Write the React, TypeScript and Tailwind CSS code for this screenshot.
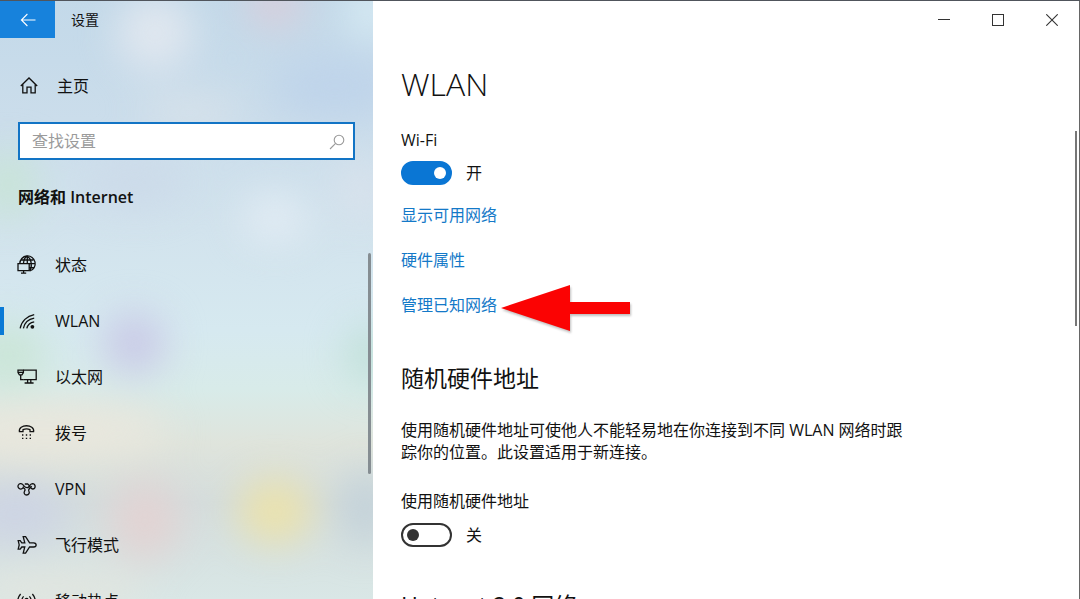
import type { ReactNode } from "react";

function Icon({ children }: { children: ReactNode }) {
  return (
    <svg
      viewBox="0 0 20 20"
      className="size-5 shrink-0"
      fill="none"
      stroke="currentColor"
      strokeWidth="1.3"
      aria-hidden="true"
    >
      {children}
    </svg>
  );
}

const HomeIcon = () => (
  <Icon>
    <path d="M1.8 10 L10 2 L18.2 10 M3.8 8.4 V16.8 H8 V11.2 H12 V16.8 H16.2 V8.4" />
  </Icon>
);

const StatusIcon = () => (
  <Icon>
    <path d="M2.8 8.6 A7.7 7.7 0 1 1 12.8 16 M4.4 5 H16.4 M12.2 12.6 H17.4 M12 8.6 H18" />
    <path d="M6.4 8.6 C6.8 4.6 8.4 1.8 10.3 1.4 C14.8 3.8 15.4 12.4 12.6 15.8 M10.3 1.4 V8.6" />
    <path d="M1 8.6 H12.2 V15.6 H1 Z M6.6 15.6 V18 M4 18.2 H9.2" />
  </Icon>
);

const WlanIcon = () => (
  <Icon>
    <path d="M3.2 17.4 C4.4 10.4 9.8 5 17.2 3.6 M6.4 17.4 C7.4 12.4 11.4 8.2 17.2 7.2 M9.8 17.4 C10.6 14 13.4 11.4 17.2 10.8" />
    <circle cx="15.4" cy="15.8" r="1.9" fill="currentColor" stroke="none" />
  </Icon>
);

const EthernetIcon = () => (
  <Icon>
    <path d="M6.4 3.2 H19.2 V12.6 H6.2 M10.6 12.6 V15.8 M13.8 12.6 V15.8 M7.6 16 H16.6" />
    <path d="M1 2.4 V5.6 L2.4 7.8 H5 L6.4 5.6 V2.4 M0.6 3.2 H6.4 M1 5.4 H6.4 M3.7 7.8 V12.6 H6.2" />
  </Icon>
);

const DialIcon = () => (
  <Icon>
    <path d="M2.4 8.6 C1 0.8 18 0.8 16.6 8.6 H13 V6.6 C11 5.8 8 5.8 6 6.6 V8.6 Z" />
    <path
      d="M5 12 H6.4 M8.8 12 H10.2 M12.6 12 H14 M5 15.4 H6.4 M8.8 15.4 H10.2 M12.6 15.4 H14"
      strokeWidth="1.4"
    />
  </Icon>
);

const VpnIcon = () => (
  <Icon>
    <path d="M6.4 7.4 A2.7 2.7 0 1 1 5.6 5.4 C7.4 7.2 8.2 9 10.6 8.6 C12.6 8 12.6 4.8 15.4 4.6 C19 4.8 19 9.8 15.6 10 C13.4 10 12.6 6.2 10.8 5 H7.8" />
    <path d="M6.2 8.6 C8 9.6 8.6 10.6 7.6 12 C6.4 14 7.6 16 9.6 16 C11.8 16 13 13.8 11.8 12 C11.2 10.4 12.8 8.8 14.8 7.4" />
  </Icon>
);

const PlaneIcon = () => (
  <Icon>
    <path d="M6.2 1.6 H8.6 L12.6 7.8 H16.6 C20 8.2 20 11.6 16.6 12 H12.6 L8.6 18.2 H6.2 L7.8 12 H4.8 L3.2 14.2 H1.2 L2.2 9.9 L1.2 5.6 H3.2 L4.8 7.8 H7.8 Z" />
  </Icon>
);

const HotspotIcon = () => (
  <Icon>
    <path d="M3.6 3 C0.2 7 0.2 12 3.6 16 M6.6 5.4 C4.4 8 4.4 11 6.6 13.6 M12.4 5.4 C14.6 8 14.6 11 12.4 13.6 M15.4 3 C18.8 7 18.8 12 15.4 16" />
    <circle cx="9.5" cy="9" r="1.5" />
    <path d="M9.5 10.6 V18" />
  </Icon>
);

const navItems = [
  { label: "状态", icon: <StatusIcon /> },
  { label: "WLAN", icon: <WlanIcon />, active: true },
  { label: "以太网", icon: <EthernetIcon /> },
  { label: "拨号", icon: <DialIcon /> },
  { label: "VPN", icon: <VpnIcon /> },
  { label: "飞行模式", icon: <PlaneIcon /> },
  { label: "移动热点", icon: <HotspotIcon /> },
];

function Backdrop() {
  return (
    <svg
      viewBox="0 0 373 599"
      preserveAspectRatio="none"
      className="absolute inset-0 -z-10 size-full"
      aria-hidden="true"
    >
      <defs>
        <linearGradient id="base" x1="0" y1="0" x2="0" y2="1">
          <stop offset="0" stopColor="#c3d9e9" />
          <stop offset="0.2" stopColor="#cbddeb" />
          <stop offset="0.38" stopColor="#d2e3ed" />
          <stop offset="0.55" stopColor="#d6e9f0" />
          <stop offset="0.65" stopColor="#d8ebe9" />
          <stop offset="0.74" stopColor="#dfe4dc" />
          <stop offset="0.84" stopColor="#d4dddd" />
          <stop offset="1" stopColor="#d9e7e6" />
        </linearGradient>
        <filter id="soft" x="-100%" y="-100%" width="300%" height="300%" colorInterpolationFilters="sRGB">
          <feGaussianBlur stdDeviation="19" />
        </filter>
      </defs>
      <rect width="373" height="599" fill="url(#base)" />
      <g filter="url(#soft)">
        <ellipse cx="155" cy="32" rx="38" ry="38" fill="#e0e7ef" />
        <ellipse cx="275" cy="2" rx="28" ry="24" fill="#dacdda" />
        <ellipse cx="372" cy="10" rx="26" ry="30" fill="#d6eaf3" />
        <ellipse cx="335" cy="85" rx="64" ry="34" fill="#bfd4ea" />
        <ellipse cx="190" cy="112" rx="50" ry="12" fill="#dce4ea" />
        <ellipse cx="8" cy="184" rx="28" ry="34" fill="#c8e4d6" />
        <ellipse cx="135" cy="182" rx="50" ry="24" fill="#ccdae9" />
        <ellipse cx="275" cy="218" rx="32" ry="24" fill="#e2ecf4" />
        <ellipse cx="360" cy="190" rx="20" ry="30" fill="#dae2ec" />
        <ellipse cx="8" cy="355" rx="38" ry="32" fill="#cae5d6" />
        <ellipse cx="134" cy="343" rx="31" ry="31" fill="#c9c9e6" />
        <ellipse cx="370" cy="354" rx="24" ry="30" fill="#c0e0d8" />
        <ellipse cx="50" cy="430" rx="120" ry="28" fill="#e9e7dd" />
        <ellipse cx="15" cy="514" rx="54" ry="30" fill="#cdd4e4" />
        <ellipse cx="145" cy="520" rx="36" ry="40" fill="#e2d3d3" />
        <ellipse cx="275" cy="511" rx="38" ry="33" fill="#ebe2ac" />
        <ellipse cx="365" cy="508" rx="24" ry="38" fill="#c2d1d9" />
        <ellipse cx="60" cy="590" rx="90" ry="18" fill="#e3e5de" />
      </g>
    </svg>
  );
}

function Sidebar() {
  return (
    <aside className="relative isolate flex w-[373px] shrink-0 flex-col overflow-hidden">
      <Backdrop />
      <header className="flex h-[37px] shrink-0 items-center gap-4">
        <button
          type="button"
          aria-label="返回"
          className="flex h-full w-[55px] items-center justify-center bg-[#1782dc] text-white"
        >
          <svg viewBox="0 0 16 14" className="h-3.5 w-4" fill="none" stroke="currentColor" strokeWidth="1.1" aria-hidden="true">
            <path d="M15.5 7 H1.4 M7.4 1 L1.4 7 L7.4 13" />
          </svg>
        </button>
        <span className="text-sm leading-5">设置</span>
      </header>

      <a href="#home" className="mt-7 flex h-10 shrink-0 items-center gap-[18px] pl-[19px] leading-6">
        <HomeIcon />
        主页
      </a>

      <div className="relative mx-[18px] mt-4 shrink-0">
        <input
          type="search"
          aria-label="查找设置"
          placeholder="查找设置"
          className="block h-[38px] w-full border-2 border-[#1274c5] bg-white pr-9 pl-3 outline-none placeholder:text-[#9b9b9b] placeholder:opacity-100"
        />
        <svg viewBox="0 0 16 16" className="absolute top-3 right-2.5 size-4" fill="none" stroke="#999" strokeWidth="1.1" aria-hidden="true">
          <circle cx="10" cy="6" r="4.8" />
          <path d="M6.6 9.4 L1 15" />
        </svg>
      </div>

      <h2 className="mt-[25px] shrink-0 pl-[18px] leading-6 font-semibold">网络和 Internet</h2>

      <nav aria-label="网络和 Internet" className="mt-7 shrink-0">
        <ul>
          {navItems.map((item) => (
            <li key={item.label}>
              <a
                href={"#" + item.label}
                aria-current={item.active ? "page" : undefined}
                className="relative flex h-14 items-center gap-[18px] pl-[17px] leading-6"
              >
                {item.active && <span className="absolute left-0 h-7 w-1 bg-[#0a7ad6]" />}
                {item.icon}
                {item.label}
              </a>
            </li>
          ))}
        </ul>
      </nav>
      <span className="absolute top-[252px] right-0.5 h-[221px] w-[3px] rounded-full bg-[#858d92]" />
    </aside>
  );
}

function Toggle({ label, on }: { label: string; on?: boolean }) {
  return (
    <label className="flex h-7 items-center gap-3.5">
      <input type="checkbox" role="switch" aria-label={label} defaultChecked={on} className="peer sr-only" />
      <span className="flex h-6 w-[51px] items-center rounded-full border-2 border-[#333] px-1 text-[#333] peer-checked:justify-end peer-checked:border-[#0a76d4] peer-checked:bg-[#0a76d4] peer-checked:text-white">
        <span className="size-3 rounded-full bg-current" />
      </span>
      <span className="leading-6">{on ? "开" : "关"}</span>
    </label>
  );
}

function CaptionButtons() {
  return (
    <div className="flex h-[37px] shrink-0 justify-end text-[#333]">
      <button type="button" aria-label="最小化" className="flex w-[54px] items-center justify-center">
        <span className="h-px w-3 bg-current" />
      </button>
      <button type="button" aria-label="最大化" className="flex w-[54px] items-center justify-center">
        <span className="size-3 border border-current" />
      </button>
      <button type="button" aria-label="关闭" className="flex w-[54px] items-center justify-center">
        <svg viewBox="0 0 12 12" className="size-3" fill="none" stroke="currentColor" strokeWidth="1.1" aria-hidden="true">
          <path d="M0.3 0.3 L11.7 11.7 M11.7 0.3 L0.3 11.7" />
        </svg>
      </button>
    </div>
  );
}

function Content() {
  return (
    <main className="relative flex min-w-0 flex-1 flex-col overflow-hidden border-r border-[#666] bg-white">
      <CaptionButtons />
      <div className="shrink-0 px-7 pt-[26px]">
        <h1 className="text-[32px] leading-10 font-[350]">WLAN</h1>

        <p className="mt-6 leading-6">Wi-Fi</p>
        <div className="mt-[7px]">
          <Toggle label="Wi-Fi" on />
        </div>

        <ul className="mt-4 flex flex-col items-start gap-[21px] leading-6 text-[#1479c8]">
          <li><a href="#available">显示可用网络</a></li>
          <li><a href="#hardware">硬件属性</a></li>
          <li className="relative">
            <a href="#known">管理已知网络</a>
            <svg viewBox="0 0 134 52" className="absolute -top-3 left-full h-[52px] w-[134px] overflow-visible drop-shadow-[1px_2px_1px_#8888]" aria-hidden="true">
              <path d="M4 27 L73 4 V21 H133 V33 H73 V50 Z" fill="#fb0303" />
            </svg>
          </li>
        </ul>

        <h2 className="mt-[45px] text-[23px] leading-8">随机硬件地址</h2>
        <p className="mt-[25px] max-w-[516px] leading-[22px]">
          使用随机硬件地址可使他人不能轻易地在你连接到不同 WLAN 网络时跟踪你的位置。此设置适用于新连接。
        </p>
        <p className="mt-[26px] leading-6">使用随机硬件地址</p>
        <div className="mt-2">
          <Toggle label="使用随机硬件地址" />
        </div>
        <h2 className="mt-10 text-[23px] leading-8">Hotspot 2.0 网络</h2>
      </div>
      <span className="absolute top-[130px] right-0.5 h-[195px] w-0.5 bg-[#777]" />
    </main>
  );
}

export default function App() {
  return (
    <div className="flex h-screen overflow-hidden border-t border-[#50555c] bg-white font-['Open_Sans','Noto_Sans_CJK_SC',sans-serif] text-base text-[#111]">
      <Sidebar />
      <Content />
    </div>
  );
}
